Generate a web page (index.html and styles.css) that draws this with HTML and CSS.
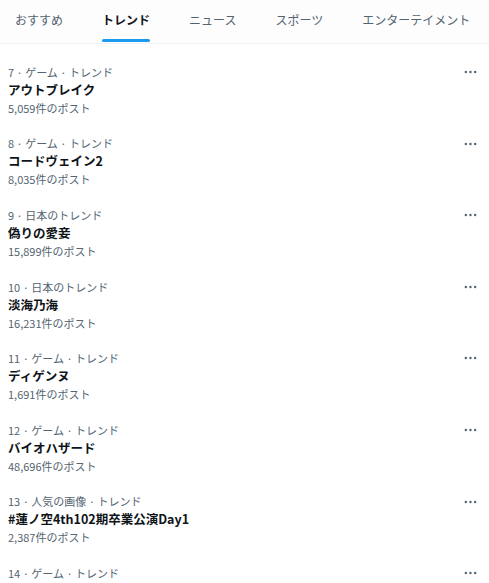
FILE: index.html
```html
<!DOCTYPE html>
<html lang="ja">
<head>
    <meta charset="UTF-8">
    <title>トレンド</title>
    <link rel="stylesheet" href="styles.css">
</head>
<body>
    <nav class="tabs">
        <a class="tab">おすすめ</a>
        <a class="tab active">トレンド</a>
        <a class="tab">ニュース</a>
        <a class="tab">スポーツ</a>
        <a class="tab">エンターテイメント</a>
    </nav>

    <div class="trends">
        <div class="trend">
            <div class="meta">7 · ゲーム · トレンド</div>
            <div class="name">アウトブレイク</div>
            <div class="count">5,059件のポスト</div>
            <svg class="more" viewBox="0 0 14 4"><circle cx="2" cy="2" r="1.3"/><circle cx="7" cy="2" r="1.3"/><circle cx="12" cy="2" r="1.3"/></svg>
        </div>
        <div class="trend">
            <div class="meta">8 · ゲーム · トレンド</div>
            <div class="name">コードヴェイン2</div>
            <div class="count">8,035件のポスト</div>
            <svg class="more" viewBox="0 0 14 4"><circle cx="2" cy="2" r="1.3"/><circle cx="7" cy="2" r="1.3"/><circle cx="12" cy="2" r="1.3"/></svg>
        </div>
        <div class="trend">
            <div class="meta">9 · 日本のトレンド</div>
            <div class="name">偽りの愛妾</div>
            <div class="count">15,899件のポスト</div>
            <svg class="more" viewBox="0 0 14 4"><circle cx="2" cy="2" r="1.3"/><circle cx="7" cy="2" r="1.3"/><circle cx="12" cy="2" r="1.3"/></svg>
        </div>
        <div class="trend">
            <div class="meta">10 · 日本のトレンド</div>
            <div class="name">淡海乃海</div>
            <div class="count">16,231件のポスト</div>
            <svg class="more" viewBox="0 0 14 4"><circle cx="2" cy="2" r="1.3"/><circle cx="7" cy="2" r="1.3"/><circle cx="12" cy="2" r="1.3"/></svg>
        </div>
        <div class="trend">
            <div class="meta">11 · ゲーム · トレンド</div>
            <div class="name">ディゲンヌ</div>
            <div class="count">1,691件のポスト</div>
            <svg class="more" viewBox="0 0 14 4"><circle cx="2" cy="2" r="1.3"/><circle cx="7" cy="2" r="1.3"/><circle cx="12" cy="2" r="1.3"/></svg>
        </div>
        <div class="trend">
            <div class="meta">12 · ゲーム · トレンド</div>
            <div class="name">バイオハザード</div>
            <div class="count">48,696件のポスト</div>
            <svg class="more" viewBox="0 0 14 4"><circle cx="2" cy="2" r="1.3"/><circle cx="7" cy="2" r="1.3"/><circle cx="12" cy="2" r="1.3"/></svg>
        </div>
        <div class="trend">
            <div class="meta">13 · 人気の画像 · トレンド</div>
            <div class="name">#蓮ノ空4th102期卒業公演Day1</div>
            <div class="count">2,387件のポスト</div>
            <svg class="more" viewBox="0 0 14 4"><circle cx="2" cy="2" r="1.3"/><circle cx="7" cy="2" r="1.3"/><circle cx="12" cy="2" r="1.3"/></svg>
        </div>
        <div class="trend">
            <div class="meta">14 · ゲーム · トレンド</div>
            <svg class="more" viewBox="0 0 14 4"><circle cx="2" cy="2" r="1.3"/><circle cx="7" cy="2" r="1.3"/><circle cx="12" cy="2" r="1.3"/></svg>
        </div>
    </div>
</body>
</html>
```

FILE: styles.css
```css
body {
    margin: 0;
    font-family: "Noto Sans CJK JP", "Noto Sans", sans-serif;
    background: #fff;
    color: #0f1419;
    overflow: hidden;
}

.tabs {
    display: flex;
    gap: 39px;
    padding-left: 15px;
    height: 43px;
    border-bottom: 1px solid #eff3f4;
    background: #fdfdfd;
}
.tab {
    position: relative;
    font-size: 12px;
    line-height: 40px;
    color: #536471;
    white-space: nowrap;
}
.tab.active {
    color: #0f1419;
    font-weight: 700;
}
.tab.active::after {
    content: "";
    position: absolute;
    left: 0;
    right: 0;
    bottom: 1px;
    height: 3px;
    border-radius: 2px;
    background: #1d9bf0;
}

.trends {
    padding-top: 10px;
}
.trend {
    position: relative;
    padding: 8.8px 8px;
}
.meta,
.count {
    font-size: 11px;
    line-height: 18px;
    color: #536471;
}
.name {
    font-size: 12.5px;
    line-height: 18px;
    font-weight: 700;
}
.more {
    position: absolute;
    top: 16px;
    right: 12px;
    width: 13px;
    height: 4px;
    fill: #536471;
}
```
